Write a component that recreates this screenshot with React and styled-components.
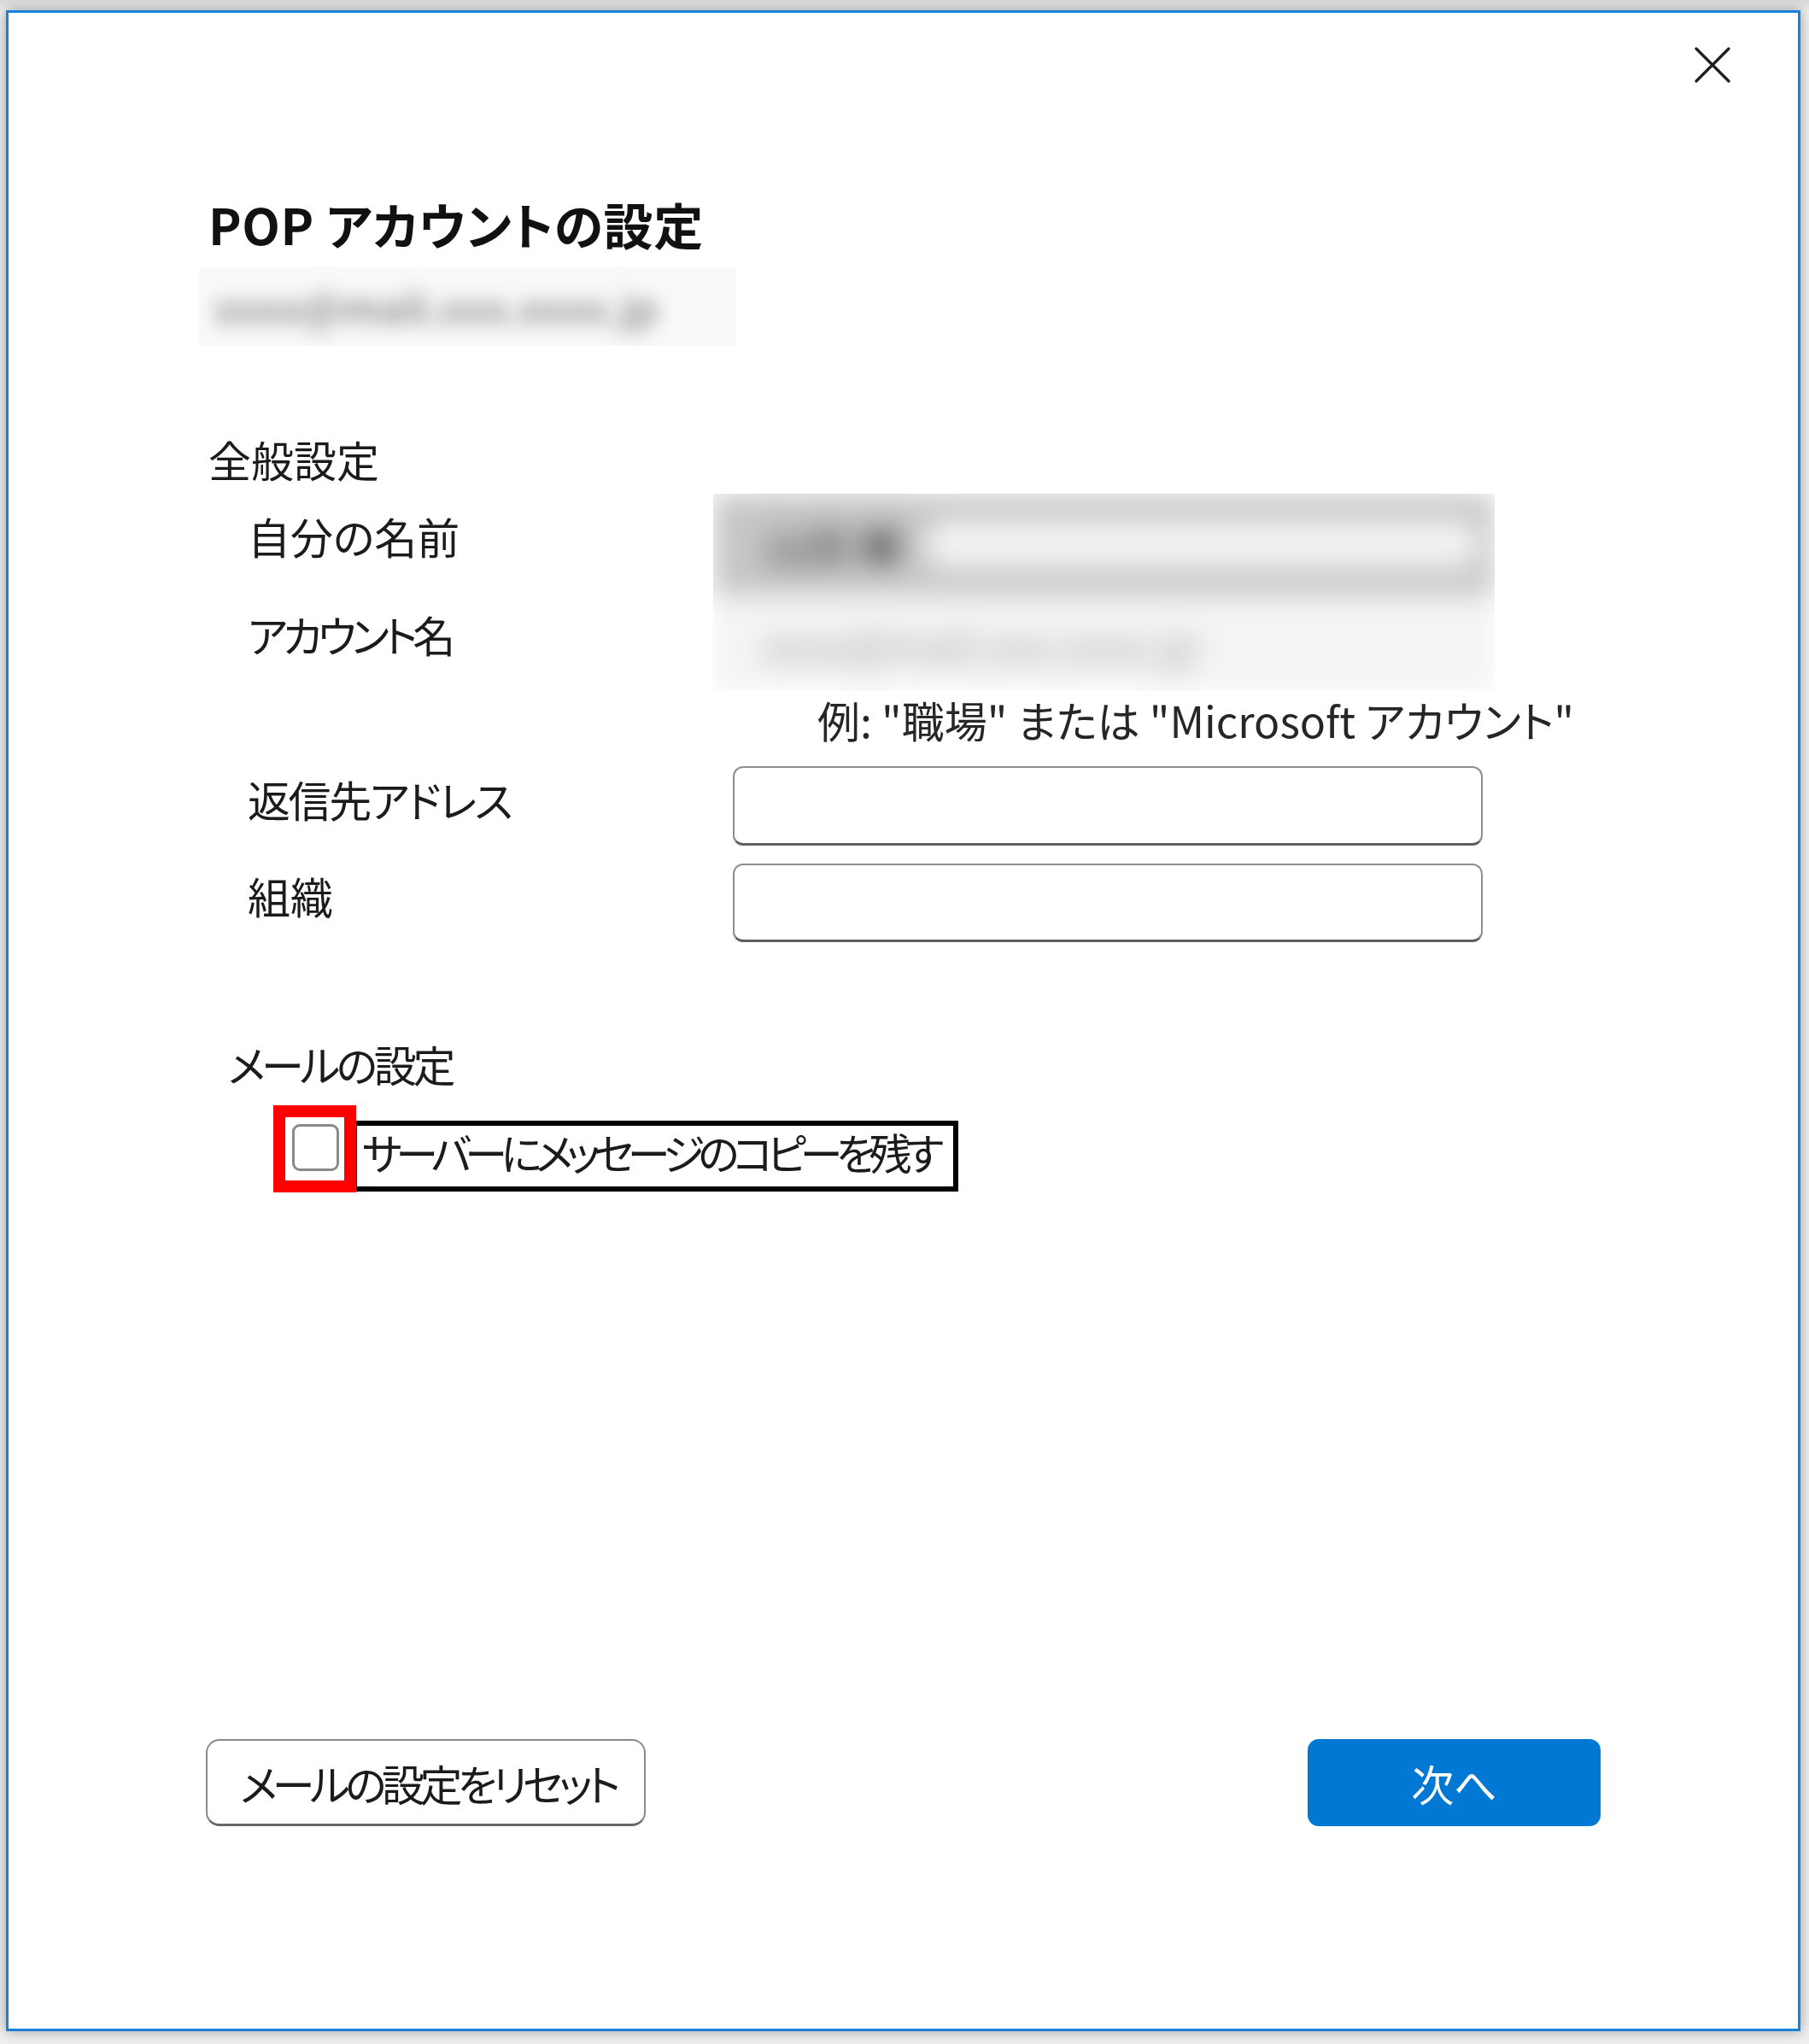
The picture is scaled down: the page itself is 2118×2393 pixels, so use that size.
import React from "react";
import styled, { createGlobalStyle } from "styled-components";

const Global = createGlobalStyle`
  html, body { margin: 0; padding: 0; }
  body {
    background: #eeeeee;
    font-family: "Noto Sans CJK JP", "Noto Sans", sans-serif;
    color: #1b1b1b;
  }
  * { box-sizing: border-box; }
`;

const Page = styled.div`
  width: 2118px;
  height: 2393px;
  padding: 12px 10px 15px 7px;
  background: linear-gradient(#d9d9d9, #efefef 14px);
`;

const Dialog = styled.div`
  width: 2101px;
  height: 2366px;
  background: #ffffff;
  border: 3px solid #1b80d8;
  box-shadow: 0 0 14px rgba(0, 0, 0, 0.35);
  display: flex;
  flex-direction: column;
  font-feature-settings: "palt";
`;

const Header = styled.div`
  display: flex;
  justify-content: flex-end;
  padding: 40px 79px 0 0;
`;

const CloseButton = styled.button`
  width: 42px;
  height: 42px;
  padding: 0;
  border: none;
  background: transparent;
  display: flex;
  align-items: center;
  justify-content: center;
  cursor: pointer;
`;

const Main = styled.div`
  padding-left: 234px;
  display: flex;
  flex-direction: column;
`;

const Title = styled.h1`
  margin: 130px 0 0 0;
  font-size: 58px;
  line-height: 70px;
  font-weight: 700;
  color: #111;
  letter-spacing: 0.6px;
`;

const BlurBox = styled.div`
  overflow: hidden;
  background: ${(p) => p.$bg || "#ffffff"};
  width: ${(p) => p.$w}px;
  height: ${(p) => p.$h}px;
  margin-left: ${(p) => p.$ml || 0}px;
  margin-top: ${(p) => p.$mt || 0}px;
`;

const Blurred = styled.div`
  filter: blur(${(p) => p.$r}px);
  width: 100%;
  height: 100%;
  display: flex;
  flex-direction: column;
`;

const BlurEmail = styled.div`
  padding: 16px 0 0 18px;
  font-size: 46px;
  line-height: 60px;
  font-weight: 700;
  color: #8e8e8e;
  white-space: nowrap;
`;

const NameBar = styled.div`
  height: 118px;
  background: #c6c6c6;
  display: flex;
  align-items: center;
  padding: 0 20px 0 60px;
  gap: 60px;
`;

const NameBlob = styled.div`
  font-size: 50px;
  font-weight: 700;
  color: #6a6a6a;
  width: 130px;
  white-space: nowrap;
`;

const NameLight = styled.div`
  flex: 1;
  height: 56px;
  background: #f3f3f3;
  border-radius: 20px;
`;

const EmailLine = styled.div`
  flex: 1;
  background: #f4f4f4;
  display: flex;
  align-items: center;
  padding-left: 58px;
  font-size: 50px;
  color: #a0a0a0;
  white-space: nowrap;
`;

const SectionHeading = styled.h2`
  margin: ${(p) => p.$mt}px 0 0 ${(p) => p.$ml || 0}px;
  font-size: 50px;
  line-height: 60px;
  font-weight: 400;
  color: #1b1b1b;
  letter-spacing: ${(p) => p.$ls || 0}px;
`;

const Form = styled.div`
  margin-left: 46px;
  display: flex;
  flex-direction: column;
`;

const BlurRow = styled.div`
  display: flex;
  margin-top: 11px;
`;

const LabelStack = styled.div`
  width: 545px;
  display: flex;
  flex-direction: column;
`;

const StackLabel = styled.div`
  height: 115.5px;
  display: flex;
  align-items: center;
  padding-bottom: 18px;
  font-size: 50px;
  line-height: 60px;
  letter-spacing: ${(p) => p.$ls || 0}px;
`;

const HintRow = styled.div`
  margin-top: 3px;
  padding-left: 667px;
  font-size: 50px;
  line-height: 60px;
  color: #262626;
  white-space: nowrap;
`;

const FieldRow = styled.div`
  display: flex;
  align-items: center;
  margin-top: ${(p) => p.$mt}px;
`;

const FieldLabel = styled.label`
  width: 568px;
  padding-bottom: 18px;
  font-size: 50px;
  line-height: 60px;
  letter-spacing: ${(p) => p.$ls || 0}px;
`;

const TextInput = styled.input`
  width: 878px;
  height: ${(p) => p.$h}px;
  border: 2px solid #8e8e8e;
  border-bottom: 3px solid #5f5f5f;
  border-radius: 12px;
  background: #fff;
  outline: none;
  font-size: 48px;
  padding: 0 16px;
`;

const CheckRow = styled.div`
  display: flex;
  align-items: flex-end;
  margin: 19px 0 0 76px;
`;

const RedFrame = styled.div`
  width: 97px;
  height: 102px;
  border: 14px solid #ff0000;
  background: #fff;
  padding: 8px 0 0 8px;
  position: relative;
  z-index: 1;
`;

const CheckBox = styled.div`
  width: 55px;
  height: 55px;
  border: 3px solid #8a8a8a;
  border-radius: 9px;
  background: #fff;
`;

const LabelFrame = styled.div`
  width: 710px;
  height: 83px;
  margin: 0 0 1px -5px;
  border: 6px solid #000;
  display: flex;
  align-items: center;
  padding: 0 0 12px 6px;
  font-size: 50px;
  line-height: 60px;
  letter-spacing: -7.5px;
  white-space: nowrap;
`;

const Footer = styled.div`
  margin-top: auto;
  padding: 0 231px 237px 231px;
  display: flex;
  justify-content: space-between;
  align-items: center;
`;

const SecondaryButton = styled.button`
  width: 515px;
  height: 102px;
  border: 2px solid #8a8a8a;
  border-bottom: 3px solid #666;
  border-radius: 16px;
  background: #fff;
  font-family: inherit;
  font-feature-settings: "palt";
  font-size: 50px;
  letter-spacing: -5.5px;
  color: #1b1b1b;
  padding: 0 0 0 5px;
`;

const PrimaryButton = styled.button`
  width: 343px;
  height: 102px;
  border: none;
  border-radius: 13px;
  background: #0078d4;
  color: #ffffff;
  font-family: inherit;
  font-feature-settings: "palt";
  font-size: 50px;
  padding: 0;
`;

export default function App() {
  return (
    <>
      <Global />
      <Page>
        <Dialog>
          <Header>
            <CloseButton aria-label="閉じる">
              <svg width="42" height="42" viewBox="0 0 42 42">
                <path d="M2 2 L40 40 M40 2 L2 40" stroke="#1f1f1f" strokeWidth="3.2" strokeLinecap="round" />
              </svg>
            </CloseButton>
          </Header>
          <Main>
            <Title>POP アカウントの設定</Title>
            <BlurBox $w={629} $h={92} $ml={-11} $mt={16} $bg="#f9f9f9">
              <Blurred $r={11}>
                <BlurEmail>xxxx@mail.xxx.xxxx.jp</BlurEmail>
              </Blurred>
            </BlurBox>

            <SectionHeading $mt={102}>全般設定</SectionHeading>
            <Form>
              <BlurRow>
                <LabelStack>
                  <StackLabel>自分の名前</StackLabel>
                  <StackLabel $ls={-5.5}>アカウント名</StackLabel>
                </LabelStack>
                <BlurBox $w={915} $h={231}>
                  <Blurred $r={16}>
                    <NameBar>
                      <NameBlob>山田 ■</NameBlob>
                      <NameLight />
                    </NameBar>
                    <EmailLine>xxxx@mail.xxx.xxxx.jp</EmailLine>
                  </Blurred>
                </BlurBox>
              </BlurRow>
              <HintRow>例: "職場" または "Microsoft アカウント"</HintRow>
              <FieldRow $mt={25}>
                <FieldLabel $ls={-2.4}>返信先アドレス</FieldLabel>
                <TextInput $h={93} />
              </FieldRow>
              <FieldRow $mt={21}>
                <FieldLabel>組織</FieldLabel>
                <TextInput $h={92} />
              </FieldRow>
            </Form>

            <SectionHeading $mt={112} $ml={23} $ls={-4.3}>メールの設定</SectionHeading>
            <CheckRow>
              <RedFrame>
                <CheckBox />
              </RedFrame>
              <LabelFrame>サーバーにメッセージのコピーを残す</LabelFrame>
            </CheckRow>
          </Main>
          <Footer>
            <SecondaryButton>メールの設定をリセット</SecondaryButton>
            <PrimaryButton>次へ</PrimaryButton>
          </Footer>
        </Dialog>
      </Page>
    </>
  );
}
